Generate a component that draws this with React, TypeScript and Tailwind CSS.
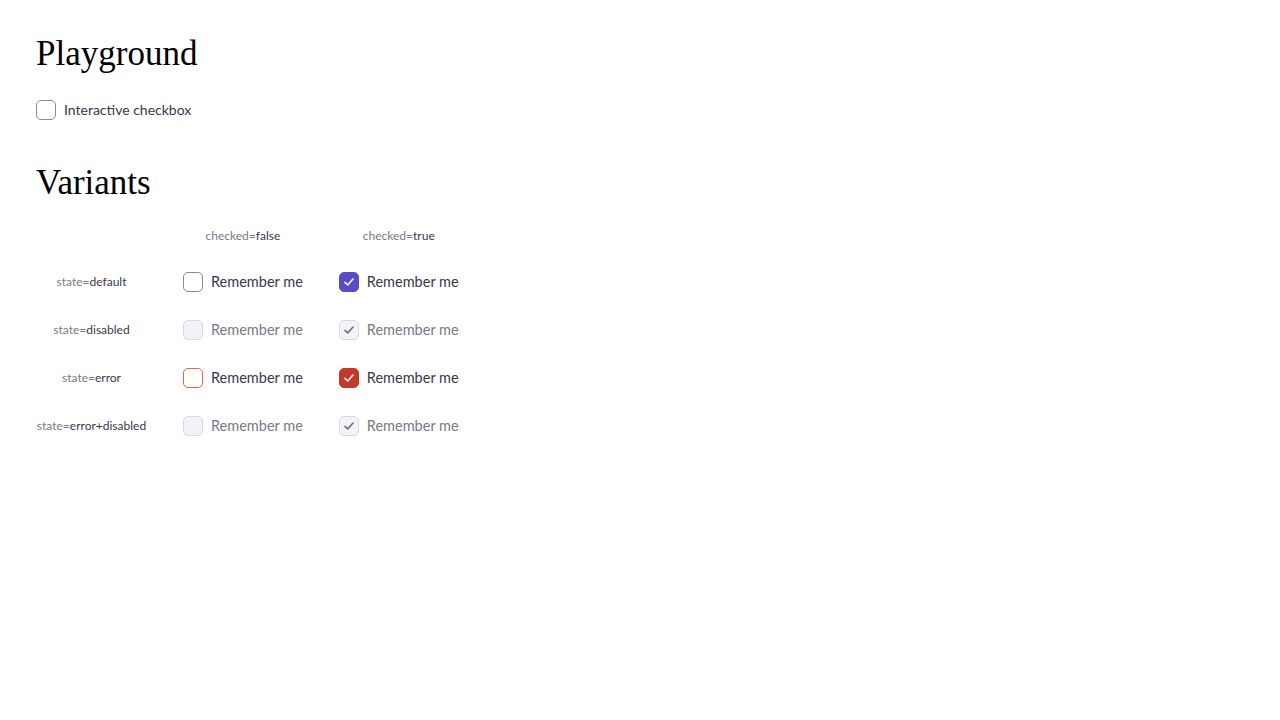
import { useState } from 'react'

type State = 'default' | 'disabled' | 'error' | 'error+disabled'

function Check({ color }: { color: string }) {
  return (
    <svg width="14" height="14" viewBox="0 0 14 14" fill="none">
      <path d="M3 7.4 L5.7 10 L11 4" stroke={color} strokeWidth="1.6" strokeLinecap="round" strokeLinejoin="round" />
    </svg>
  )
}

function Box({ checked, state, onClick }: { checked: boolean; state: State; onClick?: () => void }) {
  const disabled = state === 'disabled' || state === 'error+disabled'
  const error = state === 'error'
  let cls = 'border-[#8c8799] bg-white'
  if (disabled) cls = 'border-[#d9d7e1] bg-[#f3f2f7]'
  else if (error && checked) cls = 'border-[#c0392b] bg-[#c0392b]'
  else if (error) cls = 'border-[#e0664d] bg-white'
  else if (checked) cls = 'border-[#5a4bc7] bg-[#5a4bc7]'
  return (
    <button
      type="button"
      onClick={onClick}
      disabled={disabled}
      className={`flex h-5 w-5 shrink-0 items-center justify-center rounded-[5px] border ${cls}`}
    >
      {checked && <Check color={disabled ? '#6e6a7c' : '#ffffff'} />}
    </button>
  )
}

function Checkbox({ checked, state, label }: { checked: boolean; state: State; label: string }) {
  const disabled = state === 'disabled' || state === 'error+disabled'
  return (
    <div className="flex h-5 items-center gap-2">
      <Box checked={checked} state={state} />
      <span className={`text-[14.5px] leading-5 ${disabled ? 'text-[#7d788a]' : 'text-[#3b3650]'}`}>{label}</span>
    </div>
  )
}

function Prop({ name, value }: { name: string; value: string }) {
  return (
    <span className="text-[12px] leading-4 text-[#7d788a]">
      {name}=<span className="text-[#3b3650]">{value}</span>
    </span>
  )
}

export default function App() {
  const [on, setOn] = useState(false)
  const states: State[] = ['default', 'disabled', 'error', 'error+disabled']

  return (
    <div className="min-h-screen bg-white px-9 py-8 font-['Lato',sans-serif]">
      <h1 className="font-['Liberation_Serif',serif] text-[35px] leading-[44px] text-black">Playground</h1>
      <div className="mt-6 flex items-center gap-2">
        <Box checked={on} state="default" onClick={() => setOn(!on)} />
        <span className="text-[14px] leading-5 text-[#3b3650]">Interactive checkbox</span>
      </div>

      <h2 className="mt-[41px] font-['Liberation_Serif',serif] text-[35px] leading-[44px] text-black">Variants</h2>
      <div className="mt-[23px] grid w-max grid-cols-[111px_auto_auto] items-center gap-x-9 gap-y-7">
        <div />
        <div className="flex h-4 justify-center"><Prop name="checked" value="false" /></div>
        <div className="flex h-4 justify-center"><Prop name="checked" value="true" /></div>
        {states.map((s) => (
          <div key={s} className="contents">
            <div className="flex h-5 items-center justify-center"><Prop name="state" value={s} /></div>
            <div className="flex justify-center"><Checkbox checked={false} state={s} label="Remember me" /></div>
            <div className="flex justify-center"><Checkbox checked={true} state={s} label="Remember me" /></div>
          </div>
        ))}
      </div>
    </div>
  )
}
